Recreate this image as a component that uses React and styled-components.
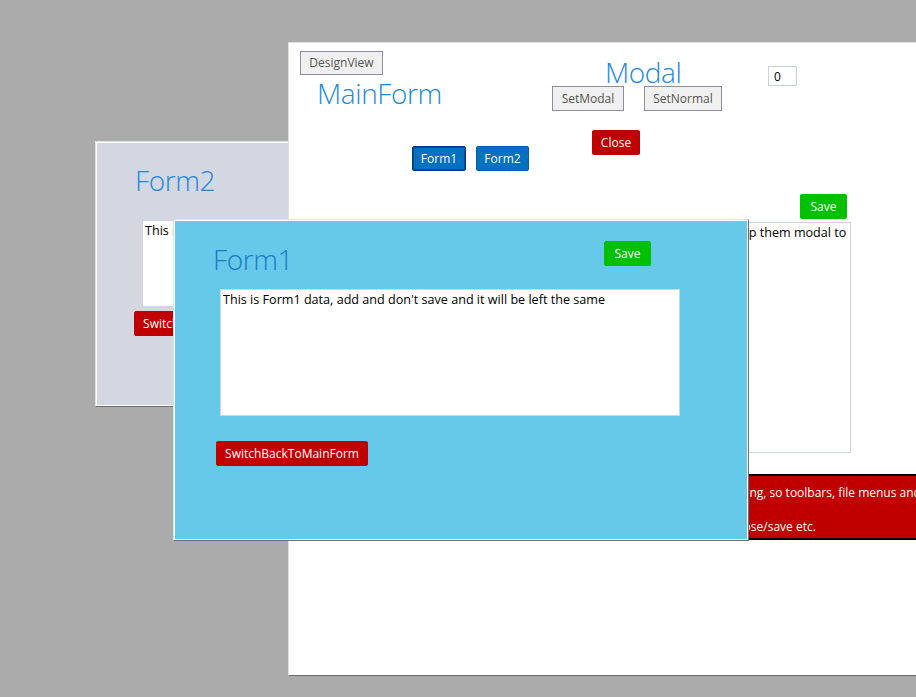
import React from "react";
import styled, { createGlobalStyle } from "styled-components";

const Global = createGlobalStyle`
  html, body { margin: 0; padding: 0; overflow: hidden; background: #ababab; }
  * { box-sizing: border-box; }
`;

const Desktop = styled.div`
  position: relative;
  width: 916px;
  height: 697px;
  overflow: hidden;
  background: #ababab;
  font-family: "Open Sans", "Noto Sans", sans-serif;
`;

const Window = styled.div`
  position: absolute;
  left: ${(p) => p.$x}px;
  top: ${(p) => p.$y}px;
  width: ${(p) => p.$w}px;
  height: ${(p) => p.$h}px;
  z-index: ${(p) => p.$z};
  background: ${(p) => p.$bg};
  border: 1px solid;
  border-color: #e2e2e2 #6e6e6e #6e6e6e #e2e2e2;
  box-shadow: inset 0 0 0 1px #ffffff;
  overflow: hidden;
  display: flex;
  flex-direction: column;
`;

const Title = styled.div`
  font-family: "Open Sans", "Noto Sans", sans-serif;
  font-weight: 300;
  font-size: 28px;
  letter-spacing: -0.4px;
  line-height: 28px;
  color: ${(p) => p.$color || "#1f88dc"};
  white-space: nowrap;
  margin: ${(p) => p.$m || "0"};
  flex: ${(p) => p.$flex || "none"};
`;

const variants = {
  gray: { bg: "#f0f0f0", border: "#8f8ea0", color: "#555555", radius: 0 },
  red: { bg: "#c00000", border: "#c00000", color: "#ffffff", radius: 2 },
  green: { bg: "#00c000", border: "#00c000", color: "#ffffff", radius: 2 },
  blue: { bg: "#0070c0", border: "#0c5da8", color: "#ffffff", radius: 2 },
  blueFocus: { bg: "#0070c0", border: "#0a3a78", color: "#ffffff", radius: 2 },
};

const Button = styled.button`
  flex: none;
  width: ${(p) => p.$w}px;
  height: ${(p) => p.$h || 25}px;
  margin: ${(p) => p.$m || "0"};
  padding: 0;
  background: ${(p) => variants[p.$v].bg};
  border: 1px solid ${(p) => variants[p.$v].border};
  ${(p) => (p.$v === "blueFocus" ? "box-shadow: inset 0 0 0 1px #0a4a8f;" : "")}
  border-radius: ${(p) => variants[p.$v].radius}px;
  color: ${(p) => variants[p.$v].color};
  font-family: "Open Sans", "Noto Sans", sans-serif;
  font-size: 12px;
  line-height: 1;
  white-space: nowrap;
  text-align: center;
  cursor: default;
`;

const NumberBox = styled.input`
  flex: none;
  width: 29px;
  height: 20px;
  margin: ${(p) => p.$m || "0"};
  border: 1px solid #c9d0dc;
  padding: 0 0 0 5px;
  font-family: "Open Sans", "Noto Sans", sans-serif;
  font-size: 12px;
  color: #000;
  background: #fff;
  outline: none;
`;

const TextBox = styled.textarea`
  flex: none;
  display: block;
  width: ${(p) => p.$w}px;
  height: ${(p) => p.$h}px;
  margin: ${(p) => p.$m || "0"};
  border: 1px solid #d0d4dc;
  padding: 2px 2px;
  resize: none;
  overflow: hidden;
  white-space: pre-wrap;
  font-family: "Open Sans", "Noto Sans", sans-serif;
  font-size: 12.6px;
  line-height: 16px;
  color: #000;
  background: #fff;
  outline: none;
`;

const Row = styled.div`
  display: flex;
  align-items: flex-start;
  gap: ${(p) => p.$gap || 0}px;
  margin: ${(p) => p.$m || "0"};
  flex: none;
`;

const Column = styled.div`
  display: flex;
  flex-direction: column;
  align-items: flex-start;
  width: ${(p) => p.$w}px;
  flex: none;
  margin: ${(p) => p.$m || "0"};
`;

const Banner = styled.div`
  flex: none;
  width: 700px;
  height: 66px;
  margin: ${(p) => p.$m || "0"};
  background: #c00000;
  border: 2px solid #000;
  color: #fff;
  font-family: "Open Sans", "Noto Sans", sans-serif;
  font-size: 12px;
  line-height: 16px;
  padding: 9px 6px 0;
  display: flex;
  flex-direction: column;
  gap: 18px;
  white-space: nowrap;
`;

export default function App() {
  return (
    <>
      <Global />
      <Desktop>
        <Window $x={95} $y={141} $w={576} $h={266} $z={1} $bg="#d3d7e2">
          <Title $m="24px 0 0 39px">Form2</Title>
          <TextBox
            $w={460}
            $h={87}
            $m="26px 0 0 46px"
            readOnly
            value="This is Form2 data, add and don't save and it will be left the same"
          />
          <Button $v="red" $w={152} $m="4px 0 0 38px">
            SwitchBackToMainForm
          </Button>
        </Window>

        <Window $x={288} $y={42} $w={680} $h={634} $z={2} $bg="#ffffff">
          <Row>
            <Column $w={263}>
              <Button $v="gray" $w={83} $h={24} $m="8px 0 0 11px">
                DesignView
              </Button>
              <Title $m="4px 0 0 28px">MainForm</Title>
              <Row $gap={10} $m="39px 0 0 123px">
                <Button $v="blueFocus" $w={54}>
                  Form1
                </Button>
                <Button $v="blue" $w={53}>
                  Form2
                </Button>
              </Row>
            </Column>
            <Column $w={216}>
              <Title $m="15px 0 0 53px">Modal</Title>
              <Row $gap={20} $m="0">
                <Button $v="gray" $w={72}>
                  SetModal
                </Button>
                <Button $v="gray" $w={78}>
                  SetNormal
                </Button>
              </Row>
              <Button $v="red" $w={48} $m="19px 0 0 40px">
                Close
              </Button>
            </Column>
            <NumberBox $m="23px 0 0 0" readOnly value="0" />
          </Row>
          <Button $v="green" $w={47} $m="23px 0 0 511px">
            Save
          </Button>
          <TextBox
            $w={513}
            $h={231}
            $m="3px 0 0 49px"
            readOnly
            value={
              "This is MainForm data, all the child forms are shown on top so we keep them modal to\nuntil they are closed."
            }
          />
          <Banner $m="21px 0 0 31px">
            <span>
              The MainForm stays in the background while the child forms are now showing, so toolbars, file menus and status bars still work
            </span>
            <span>
              Child forms can be modal or normal and each one handles its own open/close/save etc.
            </span>
          </Banner>
        </Window>

        <Window $x={173} $y={219} $w={576} $h={322} $z={3} $bg="#66c9ea">
          <Row $m="0 0 0 39px">
            <Title $color="#1f7ac6" $flex="0 0 391px" $m="25px 0 0 0">
              Form1
            </Title>
            <Button $v="green" $w={47} $m="21px 0 0 0">
              Save
            </Button>
          </Row>
          <TextBox
            $w={460}
            $h={127}
            $m="16px 0 0 46px"
            readOnly
            value="This is Form1 data, add and don't save and it will be left the same"
          />
          <Button $v="red" $w={152} $m="25px 0 0 42px">
            SwitchBackToMainForm
          </Button>
        </Window>
      </Desktop>
    </>
  );
}
